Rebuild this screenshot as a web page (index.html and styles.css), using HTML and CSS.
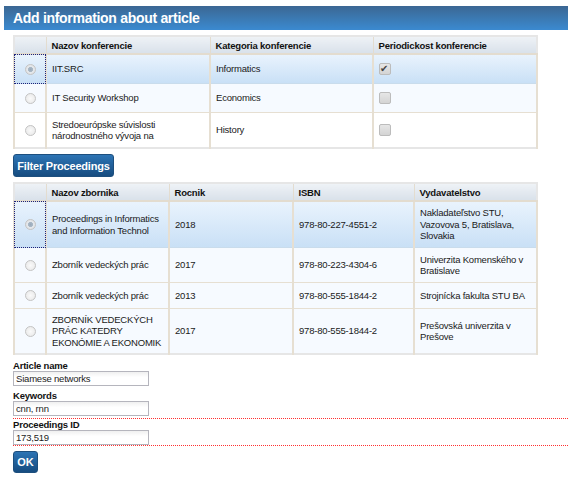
FILE: index.html
```html
<!DOCTYPE html>
<html>
<head>
<meta charset="utf-8">
<link rel="stylesheet" href="styles.css">
</head>
<body>
<div class="page">
  <h1 class="title">Add information about article</h1>
  <div class="content">
    <table class="grid conf">
      <colgroup><col class="c-sel"><col class="c1"><col class="c2"><col class="c3"></colgroup>
      <thead>
        <tr><th></th><th>Nazov konferencie</th><th>Kategoria konferencie</th><th>Periodickost konferencie</th></tr>
      </thead>
      <tbody>
        <tr class="sel r1"><td class="focus"><span class="radio on"></span></td><td>IIT.SRC</td><td>Informatics</td><td><span class="check on">&#10004;</span></td></tr>
        <tr class="r1"><td><span class="radio"></span></td><td>IT Security Workshop</td><td>Economics</td><td><span class="check"></span></td></tr>
        <tr class="r2"><td><span class="radio"></span></td><td>Stredoeurópske súvislosti<br>národnostného vývoja na</td><td>History</td><td><span class="check"></span></td></tr>
      </tbody>
    </table>
    <button class="btn filter">Filter Proceedings</button>
    <table class="grid proc">
      <colgroup><col class="c-sel"><col class="p1"><col class="p2"><col class="p3"><col class="p4"></colgroup>
      <thead>
        <tr><th></th><th>Nazov zbornika</th><th>Rocnik</th><th>ISBN</th><th>Vydavatelstvo</th></tr>
      </thead>
      <tbody>
        <tr class="sel h46"><td class="focus"><span class="radio on"></span></td><td>Proceedings in Informatics<br>and Information Technol</td><td>2018</td><td>978-80-227-4551-2</td><td>Nakladateľstvo STU,<br>Vazovova 5, Bratislava,<br>Slovakia</td></tr>
        <tr class="h35"><td><span class="radio"></span></td><td>Zborník vedeckých prác</td><td>2017</td><td>978-80-223-4304-6</td><td>Univerzita Komenského v<br>Bratislave</td></tr>
        <tr class="h26"><td><span class="radio"></span></td><td>Zborník vedeckých prác</td><td>2013</td><td>978-80-555-1844-2</td><td>Strojnícka fakulta STU BA</td></tr>
        <tr class="h45"><td><span class="radio"></span></td><td>ZBORNÍK VEDECKÝCH<br>PRÁC KATEDRY<br>EKONÓMIE A EKONOMIK</td><td>2017</td><td>978-80-555-1844-2</td><td>Prešovská univerzita v<br>Prešove</td></tr>
      </tbody>
    </table>
    <div class="field f1">
      <label class="lbl">Article name</label>
      <div class="input">Siamese networks</div>
    </div>
    <div class="field f2">
      <label class="lbl">Keywords</label>
      <div class="input">cnn, rnn</div>
    </div>
    <div class="field invalid">
      <label class="lbl">Proceedings ID</label>
      <div class="input">173,519</div>
    </div>
    <button class="btn ok">OK</button>
  </div>
</div>
</body>
</html>
```
FILE: styles.css
```css
html, body { margin: 0; padding: 0; background: #fff; }
body {
  font-family: "Liberation Sans", Arial, sans-serif;
  font-size: 9.5px;
  letter-spacing: -0.2px;
  color: #222;
}
.page { padding: 6px 0 0 4px; }
.title {
  margin: 0;
  height: 24px;
  line-height: 25px;
  padding-left: 9px;
  font-size: 14px;
  letter-spacing: -0.3px;
  font-weight: bold;
  color: #fff;
  background: linear-gradient(#3b6793, #3b8ad0);
}
.content { padding: 5px 0 0 9px; }
.grid {
  border-collapse: collapse;
  width: 524px;
  border: 2px solid #e6e6e6;
  table-layout: fixed;
  color: #1a1a1a;
}
.grid th {
  text-align: left;
  font-weight: bold;
  height: 16px;
  padding: 0 5px;
  background: linear-gradient(#eef2f6, #d9e1ea);
  border: 1px solid #e3dccf;
  border-bottom: 2px solid #e3dccf;
  color: #111;
}
.grid td {
  padding: 0 5px;
  border: 1px solid #e6dfd2;
  border-width: 1px 2px;
  vertical-align: middle;
  background: #f6faff;
  line-height: 11.5px;
}
.grid tr.sel td { background: linear-gradient(#e9f3fd, #c9e0f6); border-bottom: 1px solid #c9dcec; }
.conf tr.r1 td { height: 28px; }
.conf tr.r2 td { height: 34px; }
.conf tbody tr:last-child td { background: #fff; }
.c-sel { width: 32px; }
.c1 { width: 164px; }
.c2 { width: 163px; }
.c3 { width: 164px; }
.p1 { width: 123px; }
.p2 { width: 124px; }
.p3 { width: 121px; }
.p4 { width: 123px; }
.h46 td { height: 45px; }
.h35 td { height: 34px; }
.h26 td { height: 25px; }
.h45 td { height: 44px; }
.grid td.focus { outline: 1px dotted #1a237e; outline-offset: -1px; }
.radio {
  display: block;
  margin: 0 auto;
  width: 9px; height: 9px;
  border-radius: 50%;
  border: 1px solid #c4c4c4;
  background: radial-gradient(circle, #fafafa 0, #e6e6e6 100%);
}
.radio.on { background: radial-gradient(circle, #9ab 0, #a9b8c6 35%, #e4e8ec 45%, #e0e0e0 100%); }
.check {
  display: block;
  width: 10px; height: 10px;
  border: 1px solid #bcbcbc;
  border-radius: 2px;
  background: linear-gradient(#e6e6e6, #d4d4d4);
  font-size: 10px;
  letter-spacing: 0;
  line-height: 9px;
  color: #444;
}
.btn {
  display: block;
  border: 1px solid #1d4f7e;
  border-radius: 3px;
  color: #fff;
  font-family: "Liberation Sans", Arial, sans-serif;
  font-weight: bold;
  font-size: 11px;
  letter-spacing: -0.2px;
  background: linear-gradient(#2d74b4, #164c80);
  padding: 0;
  cursor: pointer;
}
.filter { margin: 5px 0 5px 0; width: 101px; height: 23px; }
.ok { width: 25px; height: 22px; margin-top: 5px; letter-spacing: 0; }
.field { margin-top: 4px; }
.f2 { margin-top: 3px; }
.lbl { display: block; font-weight: bold; color: #111; height: 12px; line-height: 13px; }
.input {
  width: 130px;
  height: 13px;
  padding: 0 2px;
  border: 1px solid #b5b5bd;
  line-height: 14px;
  color: #222;
  background: linear-gradient(#f0f0f0, #fff 40%);
}
.invalid {
  margin-top: 2px;
  padding: 1px 0;
  background-image:
    linear-gradient(to right, #ff3030 50%, transparent 50%),
    linear-gradient(to right, #ff3030 50%, transparent 50%);
  background-size: 2px 1px, 2px 1px;
  background-repeat: repeat-x, repeat-x;
  background-position: 0 0, 0 100%;
}
.invalid .lbl { height: 11px; line-height: 11px; }
```
